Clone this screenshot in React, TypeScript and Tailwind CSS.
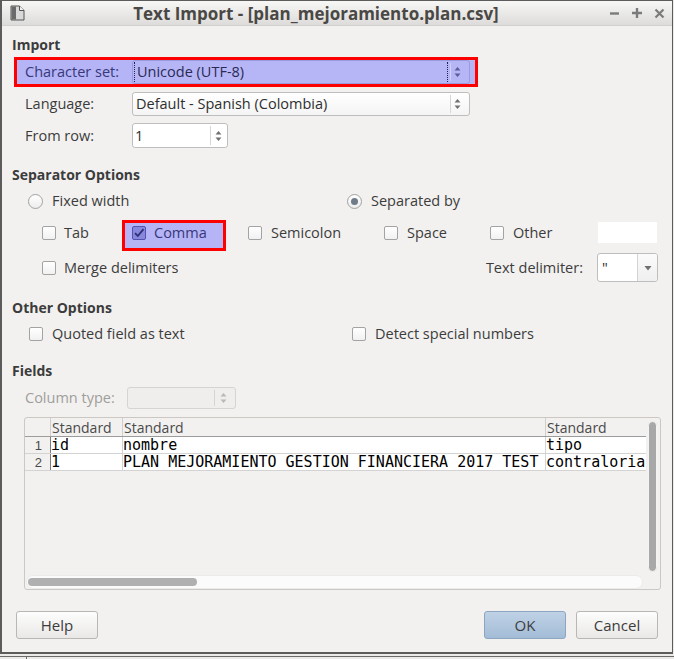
import React from "react";

const Arrows = ({ c = "#707070" }: { c?: string }) => (
  <svg width="7" height="14" viewBox="0 0 7 14">
    <path d="M3.5 2 L6.5 5.5 H0.5 Z" fill={c} />
    <path d="M0.5 8.5 H6.5 L3.5 12 Z" fill={c} />
  </svg>
);

const Box = ({ checked = false }: { checked?: boolean }) =>
  checked ? (
    <span className="w-[14px] h-[14px] shrink-0 rounded-[2px] border border-[#5454b0] bg-[#8787dc] flex items-center justify-center">
      <svg width="12" height="12" viewBox="0 0 12 12">
        <path d="M2 6.2 L4.8 9 L10.5 2.2" fill="none" stroke="#2f2f78" strokeWidth="1.8" />
      </svg>
    </span>
  ) : (
    <span className="w-[14px] h-[14px] shrink-0 rounded-[2px] border border-[#a3a3a3] bg-linear-to-b from-white to-[#f1f1f1]" />
  );

const Radio = ({ on = false }: { on?: boolean }) => (
  <span className="w-[15px] h-[15px] shrink-0 rounded-full border border-[#a2a2a2] bg-linear-to-b from-white to-[#ededed] flex items-center justify-center">
    {on && <span className="w-[7px] h-[7px] rounded-full bg-[#6f7b87]" />}
  </span>
);

const Heading = ({ children, mt }: { children: React.ReactNode; mt: string }) => (
  <div className={`${mt} h-[18px] leading-[18px] shrink-0 pl-[10px] font-bold text-[14px] text-[#3c3c3c]`}>{children}</div>
);

export default function App() {
  return (
    <div className="w-[674px] h-[659px] overflow-hidden flex flex-col bg-[#ecebea] font-['Open_Sans',sans-serif] text-[14.5px] text-[#3c3c3c]">
      <div className="flex h-[654px] shrink-0">
        <div className="w-[673px] h-[654px] border-l-2 border-r border-t border-b-2 border-[#5c5c5c] bg-[#f2f1f0] flex flex-col">
          {/* Title bar */}
          <div className="h-[25px] shrink-0 flex items-center bg-linear-to-b from-[#f7f7f6] to-[#dddcda] border-b border-[#d2d0cd]">
            <div className="w-[24px] shrink-0 pl-[8px] flex items-center">
              <svg width="15" height="16" viewBox="0 0 15 16">
                <path d="M1 1 H9.5 L14 5.5 V15 H1 Z" fill="#d9d9d9" stroke="#555" strokeWidth="1" />
                <path d="M1.5 1.5 H6 V14.5 H1.5 Z" fill="#6a6a6a" />
                <path d="M9.5 1 V5.5 H14" fill="#f4f4f4" stroke="#555" strokeWidth="1" />
              </svg>
            </div>
            <div className="flex-1 text-center font-bold text-[17px] text-[#4a4845] leading-[25px] whitespace-nowrap">
              Text Import - [plan_mejoramiento.plan.csv]
            </div>
            <div className="w-[66px] shrink-0 flex items-center pl-[3px] gap-[11px]">
              <svg width="11" height="11" viewBox="0 0 11 11"><path d="M1 5.5 H10" stroke="#7b7b7b" strokeWidth="2.4" /></svg>
              <svg width="12" height="12" viewBox="0 0 12 12"><path d="M1 6 H11 M6 1 V11" stroke="#7b7b7b" strokeWidth="2.4" /></svg>
              <svg width="11" height="11" viewBox="0 0 11 11"><path d="M1.5 1.5 L9.5 9.5 M9.5 1.5 L1.5 9.5" stroke="#7b7b7b" strokeWidth="2.2" /></svg>
            </div>
          </div>

          <Heading mt="mt-[10px]">Import</Heading>

          {/* Character set (highlighted) */}
          <div className="mt-[3px] ml-[12px] w-[464px] h-[30px] shrink-0 border-[3px] border-[#ff0000] bg-[#b4b4f6] flex items-center pl-[8px]">
            <span className="w-[107px] shrink-0 text-[#38387a]">Character set:</span>
            <div className="w-[338px] h-[24px] shrink-0 rounded-[3px] border border-[#9a9ade] bg-[#b6b6f6] flex items-center">
              <span className="ml-[1px] h-[20px] border-l border-dotted border-[#20205a]" />
              <span className="flex-1 pl-[2px] text-[#2a2a55]">Unicode (UTF-8)</span>
              <span className="h-[20px] border-l border-dotted border-[#20205a]" />
              <span className="ml-[2px] h-[18px] border-l border-[#d2d2f8]" />
              <span className="w-[18px] flex justify-start pl-[3px]"><Arrows c="#5c5c96" /></span>
            </div>
          </div>

          {/* Language */}
          <div className="mt-[5px] h-[24px] shrink-0 flex items-center pl-[23px]">
            <span className="w-[107px] shrink-0">Language:</span>
            <div className="w-[338px] h-[24px] shrink-0 rounded-[3px] border border-[#bebebe] bg-linear-to-b from-white to-[#f4f4f4] flex items-center">
              <span className="flex-1 pl-[3px] text-[#2f2f2f]">Default - Spanish (Colombia)</span>
              <span className="h-[18px] border-l border-[#d6d6d6]" />
              <span className="w-[18px] flex justify-start pl-[3px]"><Arrows /></span>
            </div>
          </div>

          {/* From row */}
          <div className="mt-[7px] h-[25px] shrink-0 flex items-center pl-[23px]">
            <span className="w-[107px] shrink-0">From row:</span>
            <div className="w-[96px] h-[25px] shrink-0 rounded-[3px] border border-[#bebebe] bg-white flex items-center">
              <span className="flex-1 pl-[2px] text-[#2f2f2f]">1</span>
              <span className="h-[19px] border-l border-[#d6d6d6]" />
              <span className="w-[16px] flex justify-start pl-[4px]"><Arrows /></span>
            </div>
          </div>

          <Heading mt="mt-[18px]">Separator Options</Heading>

          {/* Radios */}
          <div className="mt-[8px] h-[18px] shrink-0 flex items-center pl-[26px]">
            <div className="w-[319px] shrink-0 flex items-center gap-[9px]">
              <Radio />
              <span>Fixed width</span>
            </div>
            <div className="flex items-center gap-[9px]">
              <Radio on />
              <span>Separated by</span>
            </div>
          </div>

          {/* Separator checkboxes */}
          <div className="mt-[10px] h-[31px] shrink-0 flex items-start pl-[40px]">
            <div className="mt-[2px] h-[21px] w-[80px] shrink-0 flex items-center gap-[8px]">
              <Box />
              <span>Tab</span>
            </div>
            <div className="w-[104px] h-[31px] shrink-0 border-[3px] border-[#ff0000] bg-[#b4b4f6] flex items-center gap-[8px] pl-[7px] pb-[6px]">
              <Box checked />
              <span className="text-[#38387a]">Comma</span>
            </div>
            <div className="mt-[2px] h-[21px] ml-[22px] w-[136px] shrink-0 flex items-center gap-[9px]">
              <Box />
              <span>Semicolon</span>
            </div>
            <div className="mt-[2px] h-[21px] w-[106px] shrink-0 flex items-center gap-[9px]">
              <Box />
              <span>Space</span>
            </div>
            <div className="mt-[2px] h-[21px] w-[108px] shrink-0 flex items-center gap-[9px]">
              <Box />
              <span>Other</span>
            </div>
            <div className="mt-[2px] w-[59px] h-[21px] shrink-0 bg-white" />
          </div>

          {/* Merge delimiters + text delimiter */}
          <div className="mt-[2px] h-[29px] shrink-0 flex items-center pl-[40px] pr-[14px]">
            <div className="flex items-center gap-[8px]">
              <Box />
              <span>Merge delimiters</span>
            </div>
            <div className="flex-1" />
            <span className="mr-[14px]">Text delimiter:</span>
            <div className="w-[61px] h-[29px] shrink-0 rounded-[3px] border border-[#bebebe] bg-white flex items-center overflow-hidden">
              <span className="flex-1 pl-[4px] text-[#2f2f2f]">"</span>
              <span className="w-[20px] h-full border-l border-[#d4d4d4] bg-linear-to-b from-[#fbfbfb] to-[#efefef] flex items-center justify-center">
                <svg width="8" height="6" viewBox="0 0 8 6"><path d="M0.5 1 H7.5 L4 5.5 Z" fill="#707070" /></svg>
              </span>
            </div>
          </div>

          <Heading mt="mt-[17px]">Other Options</Heading>

          <div className="mt-[8px] h-[18px] shrink-0 flex items-center pl-[27px]">
            <div className="w-[323px] shrink-0 flex items-center gap-[9px]">
              <Box />
              <span>Quoted field as text</span>
            </div>
            <div className="flex items-center gap-[9px]">
              <Box />
              <span>Detect special numbers</span>
            </div>
          </div>

          <Heading mt="mt-[19px]">Fields</Heading>

          {/* Column type */}
          <div className="mt-[7px] h-[22px] shrink-0 flex items-center pl-[23px]">
            <span className="w-[102px] shrink-0 text-[#a09e9b]">Column type:</span>
            <div className="w-[109px] h-[22px] shrink-0 rounded-[3px] border border-[#d6d4d1] bg-[#efeeed] flex items-center">
              <span className="flex-1" />
              <span className="h-[16px] border-l border-[#d6d4d1]" />
              <span className="w-[20px] flex justify-start pl-[5px]"><Arrows c="#b8b8b8" /></span>
            </div>
          </div>

          {/* Table */}
          <div className="mt-[8px] ml-[22px] w-[637px] h-[173px] shrink-0 rounded-[3px] border border-[#cbc8c4] bg-[#f2f1f0] flex flex-col overflow-hidden">
            <div className="h-[157px] flex shrink-0">
              <div className="w-[621px] overflow-hidden flex flex-col">
                {/* header */}
                <div className="h-[19px] shrink-0 flex border-b border-[#9c9c9c] text-[#4a4a4a] text-[14px] leading-[19px] whitespace-nowrap">
                  <div className="w-[26px] shrink-0 border-r border-[#cfcfcf]" />
                  <div className="w-[72px] shrink-0 border-r border-[#cfcfcf] pl-[1px]">Standard</div>
                  <div className="w-[423px] shrink-0 border-r border-[#cfcfcf] pl-[1px]">Standard</div>
                  <div className="w-[120px] shrink-0 pl-[1px]">Standard</div>
                </div>
                {[
                  ["1", "id", "nombre", "tipo"],
                  ["2", "1", "PLAN MEJORAMIENTO GESTION FINANCIERA 2017 TEST", "contraloria"],
                ].map((r) => (
                  <div key={r[0]} className="h-[17px] shrink-0 flex border-b border-[#d3d3d3] whitespace-nowrap">
                    <div className="w-[26px] shrink-0 border-r border-[#7c7c7c] text-right pr-[8px] font-['Liberation_Sans',sans-serif] text-[13px] leading-[15px] pt-[1px] text-[#4a4a4a]">{r[0]}</div>
                    <div className="w-[72px] shrink-0 border-r border-[#d3d3d3] bg-white font-['DejaVu_Sans_Mono',monospace] text-[15px] leading-[16px] text-black">{r[1]}</div>
                    <div className="w-[423px] shrink-0 border-r border-[#d3d3d3] bg-white font-['DejaVu_Sans_Mono',monospace] text-[15px] leading-[16px] text-black">{r[2]}</div>
                    <div className="w-[120px] shrink-0 bg-white font-['DejaVu_Sans_Mono',monospace] text-[15px] leading-[16px] text-black">{r[3]}</div>
                  </div>
                ))}
              </div>
              <div className="w-[14px] shrink-0 pl-[2px] pt-[3px]">
                <div className="w-[9px] h-[151px] rounded-full bg-[#a8a8a8] border border-[#f4f4f4]" />
              </div>
            </div>
            <div className="h-[14px] shrink-0 pl-[1px]">
              <div className="w-[617px] h-[14px] rounded-full bg-[#fbfbfb] border border-[#ecebea] flex items-center pl-[1px]">
                <div className="w-[169px] h-[8px] rounded-full bg-[#b0b0b0]" />
              </div>
            </div>
          </div>

          {/* Buttons */}
          <div className="mt-[21px] h-[28px] shrink-0 flex items-center pl-[14px] pr-[14px]">
            <button className="w-[82px] h-[28px] rounded-[3px] border border-[#b9b7b4] bg-linear-to-b from-[#fdfdfd] to-[#e9e8e6] text-[15px] text-[#3c3c3c]">Help</button>
            <div className="flex-1" />
            <button className="w-[82px] h-[28px] rounded-[3px] border border-[#8ca6c2] bg-linear-to-b from-[#bfd2e6] to-[#a3bcd6] text-[15px] text-[#3c3c3c]">OK</button>
            <button className="ml-[10px] w-[82px] h-[28px] rounded-[3px] border border-[#b9b7b4] bg-linear-to-b from-[#fdfdfd] to-[#e9e8e6] text-[15px] text-[#3c3c3c]">Cancel</button>
          </div>
        </div>
        <div className="w-[1px] bg-[#ecebea]" />
      </div>
      <div className="h-[5px] shrink-0 flex flex-col">
        <div className="h-[2px] bg-[#ecebea]" />
        <div className="h-[1px] bg-[#6a6a6a]" />
        <div className="h-[2px] bg-[#ecebea] pl-[26px]"><div className="w-[1px] h-full bg-[#6a6a6a]" /></div>
      </div>
    </div>
  );
}
